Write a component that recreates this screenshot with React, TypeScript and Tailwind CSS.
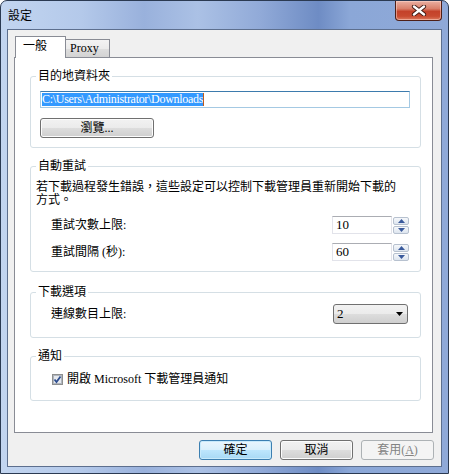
import React from "react";

const font = "font-['Liberation_Serif','Noto_Sans_CJK_TC',serif]";

type GroupProps = {
  title: string;
  className?: string;
  children: React.ReactNode;
};

// Win7 style group box: legend sits on the rounded border
const Group: React.FC<GroupProps> = ({ title, className = "", children }) => (
  <fieldset className={`rounded-[3px] border border-[#d5dfe5] p-0 ${className}`}>
    <legend className="ml-[5px] px-[2px] leading-[14px]">{title}</legend>
    {children}
  </fieldset>
);

const SpinArrow: React.FC<{ up?: boolean }> = ({ up }) => (
  <div className="flex h-[8px] w-[16px] items-center justify-center rounded-[2px] border border-[#b7c1cf] bg-[linear-gradient(#f6f8fb,#dde5ef)]">
    <svg width="7" height="4" viewBox="0 0 7 4">
      {up ? (
        <path d="M0 4 L3.5 0 L7 4 Z" fill="#3a5a9c" />
      ) : (
        <path d="M0 0 L3.5 4 L7 0 Z" fill="#3a5a9c" />
      )}
    </svg>
  </div>
);

const SpinRow: React.FC<{ label: string; value: string }> = ({ label, value }) => (
  <div className="flex items-center justify-between pl-[15px]">
    <span>{label}</span>
    <div className="flex items-center gap-[1px]">
      <div className="flex h-[18px] w-[60px] items-center border border-[#e2e3ea] border-t-[#abadb3] bg-white pl-[3px] text-[13px]">
        {value}
      </div>
      <div className="flex flex-col gap-[1px]">
        <SpinArrow up />
        <SpinArrow />
      </div>
    </div>
  </div>
);

const btn =
  "flex h-[20px] w-[73px] items-center justify-center rounded-[3px] border border-[#707070] bg-[linear-gradient(#f2f2f2_0%,#ebebeb_50%,#dddddd_50%,#cfcfcf_100%)] shadow-[inset_0_0_0_1px_#fcfcfc]";

export default function App() {
  return (
    <div
      className={`flex h-[474px] w-[449px] flex-col rounded-t-[7px] border border-[#2b3a52] bg-[linear-gradient(90deg,#c2d5f0_0%,#b4c9ea_18%,#99b1dc_32%,#abc1e5_44%,#91aad8_58%,#6e8cc4_71%,#8ba7d7_78%,#8fa9d8_100%)] text-[12px] leading-[14px] text-black ${font}`}
    >
      {/* title bar */}
      <div className="flex h-[28px] items-start justify-between">
        <span className="pl-[7px] pt-[7px] font-['Noto_Sans_CJK_TC',sans-serif]">設定</span>
        <div className="mr-[6px] flex h-[20px] w-[47px] items-center justify-center rounded-b-[4px] border border-t-0 border-[#4e1f17] bg-[linear-gradient(#eab0a2_0%,#d9806b_40%,#c4422a_55%,#c84a30_80%,#dd7a5e_100%)] shadow-[inset_0_0_0_1px_rgba(255,220,210,0.5)]">
          <svg width="16" height="11" viewBox="0 0 16 11">
            <path d="M3 1.5 L13 9.5 M13 1.5 L3 9.5" stroke="#3b1610" strokeWidth="4.2" strokeLinecap="round" />
            <path d="M3 1.5 L13 9.5 M13 1.5 L3 9.5" stroke="#ffffff" strokeWidth="2.4" strokeLinecap="round" />
          </svg>
        </div>
      </div>

      {/* client area */}
      <div className="mx-[6px] mb-[6px] flex flex-1 flex-col border border-[#5d6f8e] bg-[#f0f0f0] pl-[6px] pr-[8px] pt-[6px]">
        {/* tabs */}
        <div className="flex h-[21px] items-end pl-[1px]">
          <div className="relative z-10 -mb-[1px] h-[22px] w-[51px] border border-b-0 border-[#898c95] bg-white pl-[7px] pt-[2px]">
            一般
          </div>
          <div className="h-[18px] w-[44px] border border-b-0 border-l-0 border-[#898c95] bg-[linear-gradient(#f3f3f3_0%,#ebebeb_50%,#dedede_50%,#d3d3d3_100%)] pl-[4px] pt-[1px]">
            Proxy
          </div>
        </div>

        {/* tab page */}
        <div className="flex h-[376px] flex-col border border-[#898c95] bg-white pl-[15px] pr-[11px] pt-[11px]">
          <Group title="目的地資料夾">
            <div className="flex flex-col items-start pb-[9px] pl-[9px] pr-[10px] pt-[8px]">
              <div className="flex h-[17px] w-full items-center border border-[#a4c9e3] border-t-[#3d7bad] pl-[1px]">
                <span className="bg-[#3399ff] leading-[13px] tracking-[-0.3px] text-white">C:\Users\Administrator\Downloads</span>
                <span className="h-[13px] w-[1px] bg-[#c05a1a]" />
              </div>
              <button className={`${btn} mt-[10px] w-[114px]`}>瀏覽...</button>
            </div>
          </Group>

          <Group title="自動重試" className="mt-[11px]">
            <div className="pb-[10px] pl-[5px] pr-[11px] pt-[8px]">
              <p className="leading-[13px]">
                若下載過程發生錯誤，這些設定可以控制下載管理員重新開始下載的
                <br />
                方式。
              </p>
              <div className="mt-[9px] flex flex-col gap-[9px]">
                <SpinRow label="重試次數上限:" value="10" />
                <SpinRow label="重試間隔 (秒):" value="60" />
              </div>
            </div>
          </Group>

          <Group title="下載選項" className="mt-[13px]">
            <div className="flex items-center justify-between pb-[13px] pl-[20px] pr-[12px] pt-[5px]">
              <span>連線數目上限:</span>
              <div className="flex h-[20px] w-[75px] items-center justify-between rounded-[3px] border border-[#707070] bg-[linear-gradient(#f2f2f2_0%,#ebebeb_50%,#dddddd_50%,#cfcfcf_100%)] pl-[3px] pr-[4px] text-[13px]">
                <span>2</span>
                <svg width="7" height="4" viewBox="0 0 7 4">
                  <path d="M0 0 L7 0 L3.5 4 Z" fill="#000" />
                </svg>
              </div>
            </div>
          </Group>

          <Group title="通知" className="mt-[11px]">
            <div className="flex h-[37px] items-start pl-[21px] pt-[9px]">
              <div className="flex h-[14px] items-center gap-[4px]">
                <svg width="11" height="11" viewBox="0 0 11 11">
                  <rect x="0.5" y="0.5" width="10" height="10" fill="#f4f4f4" stroke="#8e8f8f" />
                  <rect x="1.5" y="1.5" width="8" height="8" fill="#e6e9ee" stroke="#b0b6be" />
                  <path d="M2.5 5.5 L4.5 8 L8.5 2.5" fill="none" stroke="#2c4d8f" strokeWidth="1.8" />
                </svg>
                <span>開啟 Microsoft 下載管理員通知</span>
              </div>
            </div>
          </Group>
        </div>

        {/* dialog buttons */}
        <div className="-mr-[1px] mt-[7px] flex justify-end gap-[8px]">
          <button className="flex h-[20px] w-[73px] items-center justify-center rounded-[3px] border border-[#3c7fb1] bg-[linear-gradient(#eaf6fd_0%,#d9f0fc_50%,#bee6fd_50%,#a7d9f5_100%)] shadow-[inset_0_0_0_1px_#c8eafb]">
            確定
          </button>
          <button className={btn}>取消</button>
          <button className="flex h-[20px] w-[73px] items-center justify-center rounded-[3px] border border-[#adb2b5] bg-[#f4f4f4] text-[#838383]">
            套用(<u>A</u>)
          </button>
        </div>
      </div>
    </div>
  );
}
